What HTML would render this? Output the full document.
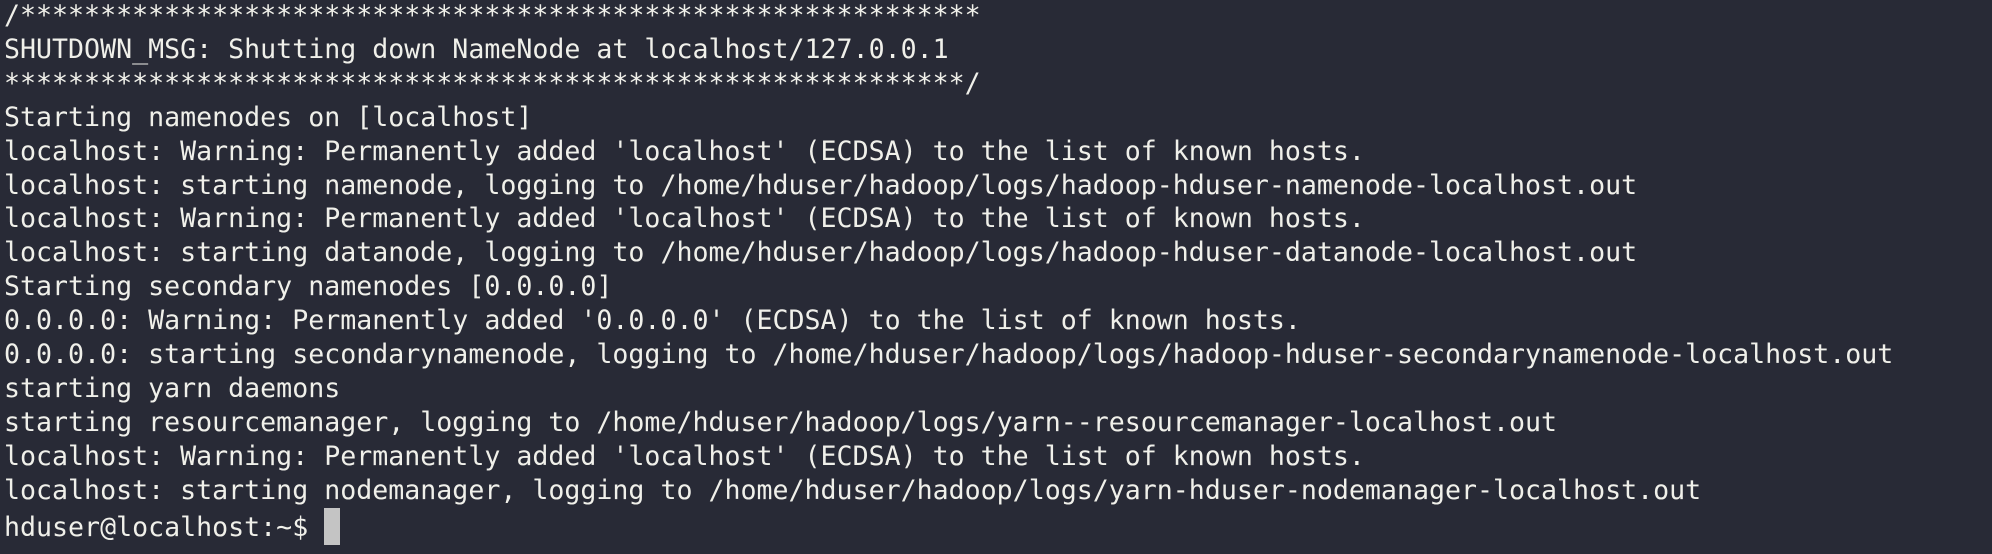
<!DOCTYPE html>
<html><head><meta charset="utf-8"><style>
html,body{margin:0;padding:0;background:#282a36;width:1992px;height:554px;overflow:hidden}
pre{margin:0;position:absolute;left:4px;top:-1px;font-family:"DejaVu Sans Mono","Liberation Mono",monospace;font-size:26.6px;line-height:33.9px;color:#f0f0ea;white-space:pre}
.c{display:inline-block;width:16px;height:37px;background:#c4c4c4;vertical-align:-9px}
</style></head><body><pre>/************************************************************
SHUTDOWN_MSG: Shutting down NameNode at localhost/127.0.0.1
************************************************************/
Starting namenodes on [localhost]
localhost: Warning: Permanently added 'localhost' (ECDSA) to the list of known hosts.
localhost: starting namenode, logging to /home/hduser/hadoop/logs/hadoop-hduser-namenode-localhost.out
localhost: Warning: Permanently added 'localhost' (ECDSA) to the list of known hosts.
localhost: starting datanode, logging to /home/hduser/hadoop/logs/hadoop-hduser-datanode-localhost.out
Starting secondary namenodes [0.0.0.0]
0.0.0.0: Warning: Permanently added '0.0.0.0' (ECDSA) to the list of known hosts.
0.0.0.0: starting secondarynamenode, logging to /home/hduser/hadoop/logs/hadoop-hduser-secondarynamenode-localhost.out
starting yarn daemons
starting resourcemanager, logging to /home/hduser/hadoop/logs/yarn--resourcemanager-localhost.out
localhost: Warning: Permanently added 'localhost' (ECDSA) to the list of known hosts.
localhost: starting nodemanager, logging to /home/hduser/hadoop/logs/yarn-hduser-nodemanager-localhost.out
hduser@localhost:~$ <span class="c"></span></pre></body></html>
